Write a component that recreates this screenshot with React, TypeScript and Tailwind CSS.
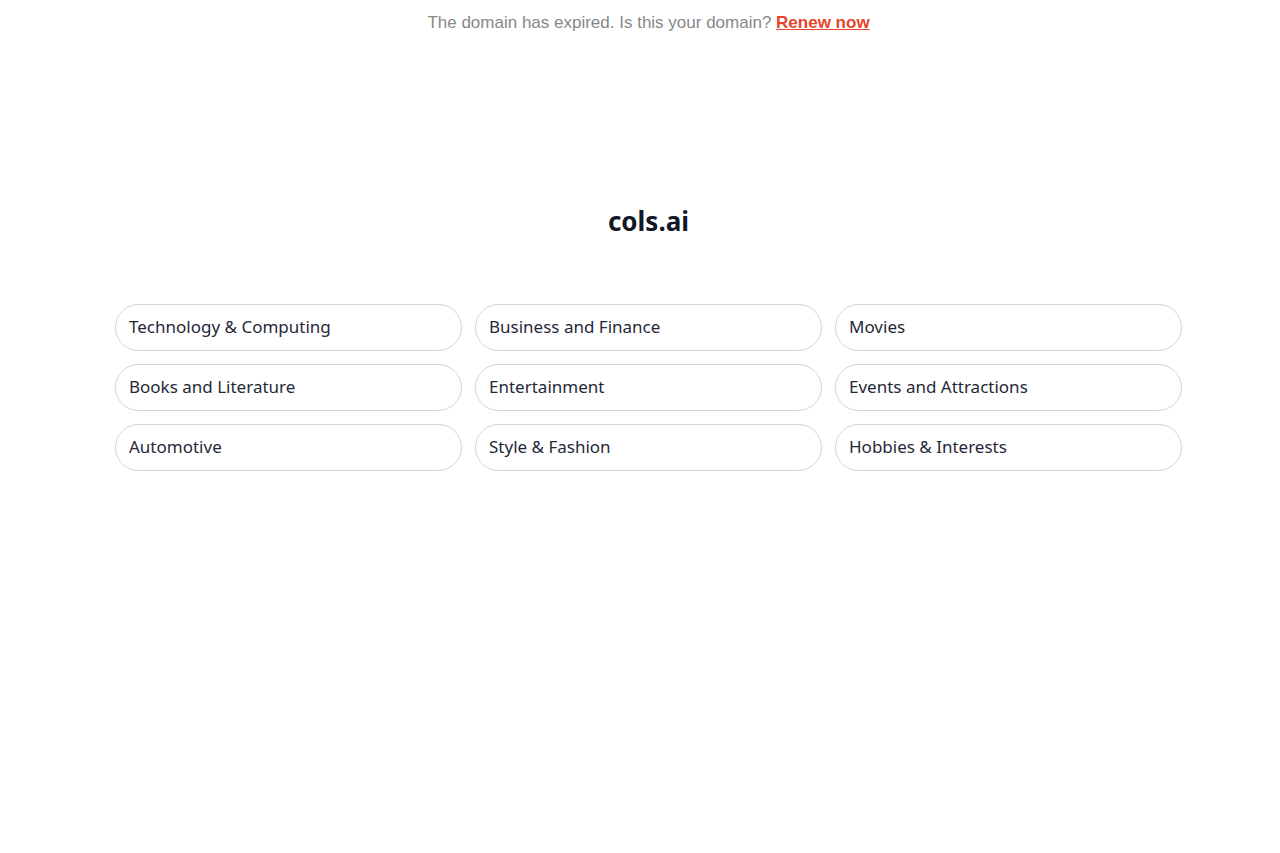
const categories = [
  "Technology & Computing",
  "Business and Finance",
  "Movies",
  "Books and Literature",
  "Entertainment",
  "Events and Attractions",
  "Automotive",
  "Style & Fashion",
  "Hobbies & Interests",
];

export default function App() {
  return (
    <div className="min-h-screen bg-white pl-[17px]">
      {/* expiry notice */}
      <div className="pt-[11px] text-center font-['Liberation_Sans',Arial,sans-serif] text-[17px] leading-[23px] text-[#888888]">
        The domain has expired. Is this your domain?{" "}
        <a href="#" className="font-bold text-[#e5452b] underline">
          Renew now
        </a>
      </div>

      <main className="mx-auto w-[1067px] font-['Noto_Sans',sans-serif]">
        <h1 className="mt-[171px] text-center text-[26px] font-bold leading-[32px] text-[#111827]">
          cols.ai
        </h1>

        <div className="mt-[67px] grid grid-cols-3 gap-[13px]">
          {categories.map((c) => (
            <a
              key={c}
              href="#"
              className="flex h-[47px] items-center rounded-full border border-[#d4d4d8] px-[13px] pb-[1px] text-[17px] text-[#1f2937]"
            >
              {c}
            </a>
          ))}
        </div>
      </main>
    </div>
  );
}
